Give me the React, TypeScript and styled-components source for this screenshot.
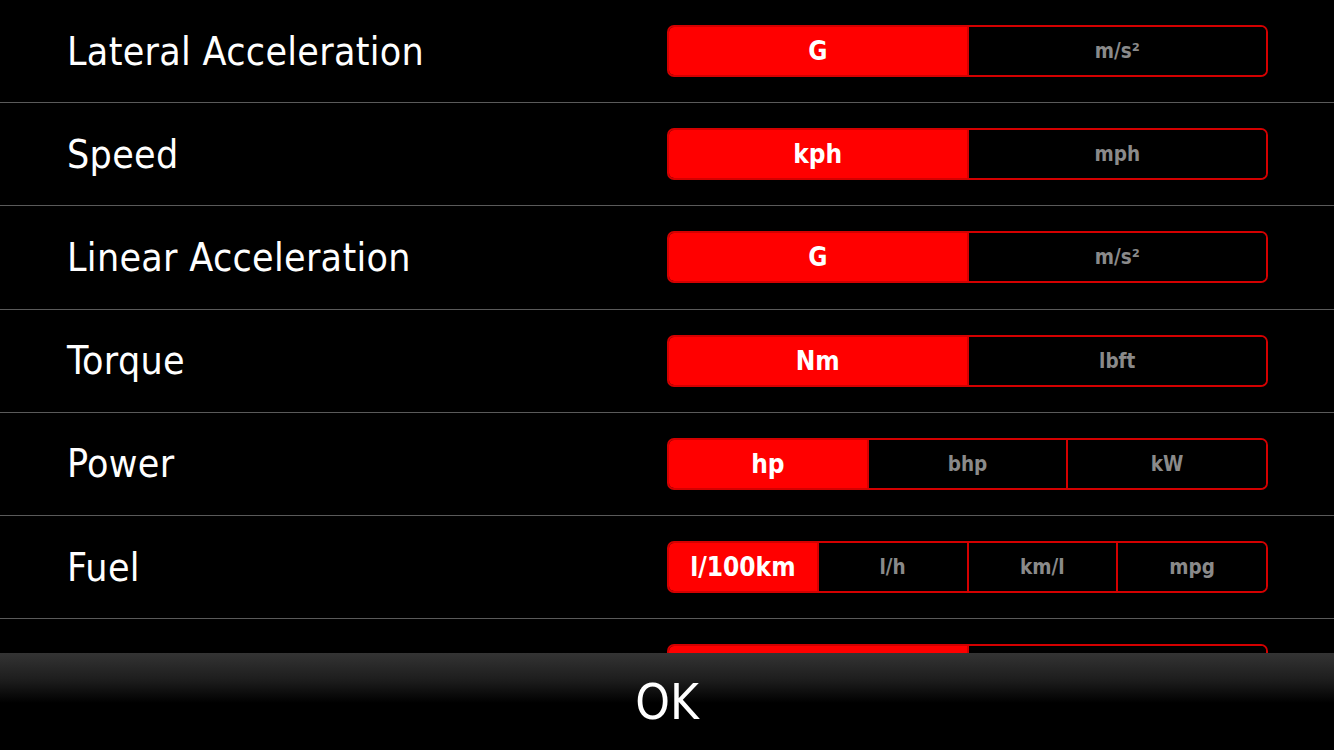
import React from "react";
import styled, { createGlobalStyle } from "styled-components";

const GlobalStyle = createGlobalStyle`
  html, body { margin: 0; padding: 0; background: #000; }
  body { width: 1334px; height: 750px; overflow: hidden; }
  #root { height: 750px; }
`;

const Screen = styled.div`
  width: 1334px;
  height: 750px;
  display: flex;
  flex-direction: column;
  background: #000;
  overflow: hidden;
`;

const List = styled.div`
  flex: 0 0 653px;
  overflow: hidden;
  display: flex;
  flex-direction: column;
`;

const Row = styled.div`
  flex: 0 0 103.2px;
  box-sizing: border-box;
  display: flex;
  align-items: center;
  justify-content: space-between;
  padding: 0 66px 0 67px;
  border-bottom: 1px solid #5a5a5a;
`;

const Label = styled.div`
  color: #fff;
  font-family: "DejaVu Sans Condensed", "Open Sans", sans-serif;
  font-size: 39px;
  letter-spacing: 0.3px;
`;

const Segmented = styled.div`
  width: 601px;
  height: 52px;
  box-sizing: border-box;
  border: 2px solid #d40000;
  border-radius: 7px;
  display: flex;
  overflow: hidden;
  background: #000;
`;

const Segment = styled.div<{ $active: boolean }>`
  flex: 1 1 0;
  display: flex;
  align-items: center;
  justify-content: center;
  background: ${(p) => (p.$active ? "#ff0000" : "#000")};
  color: ${(p) => (p.$active ? "#fff" : "#8a8a8a")};
  font-family: "Liberation Sans Narrow", "DejaVu Sans Condensed", "Roboto", sans-serif;
  font-weight: bold;
  font-size: ${(p) => (p.$active ? "26px" : "20.5px")};
  & + & {
    border-left: 2px solid #d40000;
  }
`;

const Bar = styled.div`
  flex: 1 1 auto;
  display: flex;
  align-items: center;
  justify-content: center;
  background: linear-gradient(to bottom, #343434 0px, #1c1c1c 28px, #000 50px, #000 100%);
  color: #fff;
  font-family: "DejaVu Sans Condensed", "Open Sans", sans-serif;
  font-size: 49px;
  padding-top: 1px;
`;

type Setting = { label: string; options: string[]; active: number };

const settings: Setting[] = [
  { label: "Lateral Acceleration", options: ["G", "m/s²"], active: 0 },
  { label: "Speed", options: ["kph", "mph"], active: 0 },
  { label: "Linear Acceleration", options: ["G", "m/s²"], active: 0 },
  { label: "Torque", options: ["Nm", "lbft"], active: 0 },
  { label: "Power", options: ["hp", "bhp", "kW"], active: 0 },
  { label: "Fuel", options: ["l/100km", "l/h", "km/l", "mpg"], active: 0 },
  /* partially hidden row peeking under the OK bar: only its control's top edge is visible */
  { label: "", options: ["", ""], active: 0 },
];

export default function App() {
  return (
    <>
      <GlobalStyle />
      <Screen>
        <List>
          {settings.map((s, r) => (
            <Row key={r}>
              <Label>{s.label}</Label>
              <Segmented>
                {s.options.map((o, i) => (
                  <Segment key={i} $active={i === s.active}>
                    {o}
                  </Segment>
                ))}
              </Segmented>
            </Row>
          ))}
        </List>
        <Bar>OK</Bar>
      </Screen>
    </>
  );
}
